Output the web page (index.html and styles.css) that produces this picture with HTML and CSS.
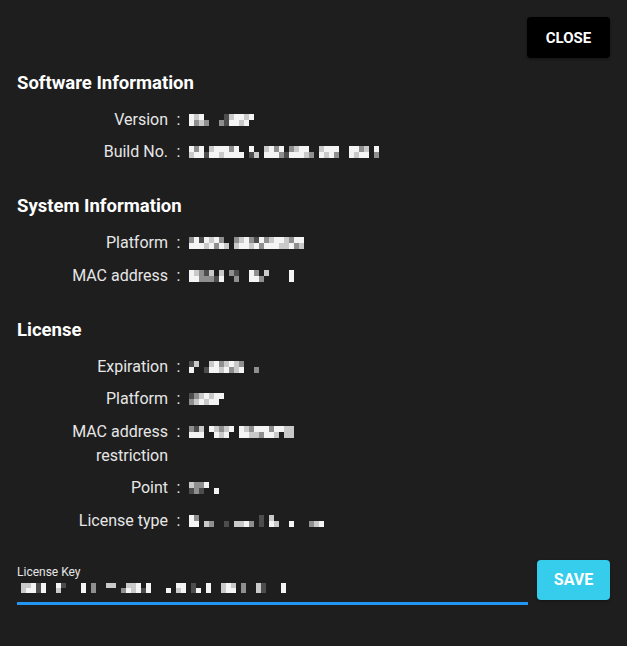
FILE: index.html
```html
<!DOCTYPE html>
<html lang="en">
<head>
<meta charset="utf-8">
<title>About</title>
<link rel="stylesheet" href="styles.css">
</head>
<body>
<div class="dialog">
  <div class="header">
    <button class="btn btn-close" type="button">Close</button>
  </div>

  <section class="section first">
    <h2 class="heading">Software Information</h2>
    <div class="rows">
      <div class="row"><span class="label">Version</span><span class="colon">:</span>
        <span class="mz"><i class="t1 b1"></i><i class="t2 b3"></i><i class="t1 b2"></i><i class="b3"></i><i></i><i></i><i class="b3"></i><i class="t4 b4"></i><i class="t2 b1"></i><i class="t1 b1"></i><i class="t1 b2"></i><i class="t2 b1"></i><i class="t1"></i></span></div>
      <div class="row"><span class="label">Build No.</span><span class="colon">:</span>
        <span class="mz"><i class="t1 b2"></i><i class="t3 b1"></i><i class="t1 b1"></i><i class="b4"></i><i class="t2 b1"></i><i class="t1 b1"></i><i class="t1 b2"></i><i class="t1 b1"></i><i class="t3 b1"></i><i class="t1 b1"></i><i class="b1"></i><i></i><i class="t1 b4"></i><i class="b2"></i><i></i><i class="t2 b1"></i><i class="t1 b1"></i><i class="t3 b1"></i><i class="t1 b3"></i><i class="b4"></i><i class="t3 b1"></i><i class="t2 b1"></i><i class="t1 b1"></i><i class="t1 b2"></i><i class="b3"></i><i></i><i class="t2 b1"></i><i class="t1 b2"></i><i class="t1 b1"></i><i class="t1 b3"></i><i></i><i></i><i class="t1 b1"></i><i class="t1 b2"></i><i class="t3 b1"></i><i class="t2 b1"></i><i></i><i class="t1 b3"></i></span></div>
    </div>
  </section>

  <section class="section">
    <h2 class="heading">System Information</h2>
    <div class="rows">
      <div class="row"><span class="label">Platform</span><span class="colon">:</span>
        <span class="mz"><i class="t3 b1"></i><i class="t1 b1"></i><i class="t4 b1"></i><i class="t1 b2"></i><i class="t2 b1"></i><i class="t1 b3"></i><i class="t3 b1"></i><i class="b2"></i><i></i><i class="t3 b2"></i><i class="t2 b1"></i><i class="t1 b1"></i><i class="t3 b2"></i><i class="t4 b1"></i><i class="t1 b3"></i><i class="t3 b1"></i><i class="t2 b1"></i><i class="t1 b1"></i><i class="t1 b2"></i><i class="t2 b2"></i><i class="t3 b1"></i><i class="t1 b3"></i><i class="t1 b2"></i></span></div>
      <div class="row"><span class="label">MAC address</span><span class="colon">:</span>
        <span class="mz"><i class="t1 b1"></i><i class="t2 b1"></i><i class="t3 b3"></i><i class="t4 b3"></i><i class="t2 b3"></i><i class="b4"></i><i class="t2 b1"></i><i></i><i class="t3"></i><i class="t4 b3"></i><i></i><i></i><i class="t1 b1"></i><i class="t3 b1"></i><i class="b3"></i><i class="t2"></i><i></i><i></i><i></i><i></i><i class="t1 b1"></i></span></div>
    </div>
  </section>

  <section class="section">
    <h2 class="heading">License</h2>
    <div class="rows">
      <div class="row"><span class="label">Expiration</span><span class="colon">:</span>
        <span class="mz"><i class="t4 b1"></i><i class="t2"></i><i></i><i class="b4"></i><i class="t2 b1"></i><i class="t1 b1"></i><i class="t3 b2"></i><i class="t2 b1"></i><i class="t1 b3"></i><i class="t2 b2"></i><i class="t3 b1"></i><i></i><i></i><i class="b3"></i></span></div>
      <div class="row"><span class="label">Platform</span><span class="colon">:</span>
        <span class="mz"><i class="t4 b3"></i><i class="t3 b2"></i><i class="t2 b1"></i><i class="t1 b2"></i><i class="t2 b1"></i><i class="t1 b1"></i><i class="t1"></i></span></div>
      <div class="row"><span class="label">MAC address restriction</span><span class="colon">:</span>
        <span class="mz"><i class="t3 b1"></i><i class="t4 b1"></i><i class="t2 b1"></i><i></i><i class="t1"></i><i class="t2 b1"></i><i class="t3 b2"></i><i class="t2 b1"></i><i class="t1"></i><i></i><i class="t1 b1"></i><i class="t2 b1"></i><i class="t3 b2"></i><i class="t1 b2"></i><i class="t1 b3"></i><i class="t1 b1"></i><i class="t3 b1"></i><i class="t1 b2"></i><i class="t1"></i><i class="t2 b2"></i><i class="t2 b2"></i></span></div>
      <div class="row"><span class="label">Point</span><span class="colon">:</span>
        <span class="mz"><i class="t2 b4"></i><i class="t3 b3"></i><i class="t3 b4"></i><i class="t1"></i><i></i><i class="b1"></i></span></div>
      <div class="row"><span class="label">License type</span><span class="colon">:</span>
        <span class="mz"><i class="t1 b1"></i><i class="t3 b1"></i><i></i><i class="b2"></i><i class="b3"></i><i></i><i></i><i class="b4"></i><i></i><i class="b2"></i><i class="b2"></i><i class="b1"></i><i class="b3"></i><i></i><i class="t4 b4"></i><i></i><i class="t2 b1"></i><i class="b2"></i><i></i><i></i><i class="b1"></i><i></i><i></i><i></i><i class="b3"></i><i class="b2"></i><i class="b1"></i></span></div>
    </div>
  </section>

  <div class="key-row">
    <label class="field">
      <span class="field-label">License Key</span>
      <span class="field-input">
        <span class="mz mz-key"><i class="t2 b2"></i><i class="t2 b1"></i><i class="t1 b1"></i><i class="t4 b4"></i><i class="t1 b1"></i><i></i><i></i><i class="t1 b2"></i><i class="t4"></i><i></i><i></i><i></i><i class="t1 b1"></i><i></i><i class="t3 b3"></i><i></i><i></i><i class="t2"></i><i class="t2"></i><i></i><i class="b3"></i><i class="t2 b1"></i><i class="t2 b2"></i><i class="t1 b1"></i><i class="b4"></i><i class="t1 b1"></i><i></i><i></i><i></i><i class="b1"></i><i></i><i class="t1 b2"></i><i class="t1 b1"></i><i></i><i class="t4 b4"></i><i class="b1"></i><i></i><i class="t1 b1"></i><i></i><i></i><i class="t2 b2"></i><i class="t1 b1"></i><i class="t2 b1"></i><i></i><i class="t3 b3"></i><i></i><i></i><i class="t2 b2"></i><i class="t4 b4"></i><i></i><i></i><i></i><i class="t1 b1"></i></span>
      </span>
    </label>
    <button class="btn btn-save" type="button">Save</button>
  </div>
</div>
</body>
</html>
```

FILE: styles.css
```css
* {
  box-sizing: border-box;
}

html, body {
  margin: 0;
  padding: 0;
  background: #1e1e1e;
}

body {
  font-family: Roboto, "Liberation Sans", Arial, sans-serif;
  color: #e6e6e6;
}

.dialog {
  padding: 17px 17px 0 17px;
  min-height: 646px;
}

.header {
  display: flex;
  justify-content: flex-end;
}

.btn {
  font-family: Roboto, "Liberation Sans", Arial, sans-serif;
  font-weight: 700;
  font-size: 15px;
  text-transform: uppercase;
  color: #ffffff;
  border: none;
  border-radius: 4px;
  padding: 0;
  cursor: pointer;
}

.btn-close {
  width: 83px;
  height: 41px;
  background: #000000;
  box-shadow: 0 1px 3px rgba(0, 0, 0, 0.4);
}

.btn-save {
  width: 73px;
  height: 40px;
  background: #35cdeb;
  flex: none;
  font-size: 16px;
  box-shadow: 0 1px 3px rgba(0, 0, 0, 0.35);
}

.section {
  margin-top: 29.5px;
}

.section.first {
  margin-top: 12px;
}

.heading {
  margin: 0;
  padding-top: 0.5px;
  margin-bottom: 13px;
  font-size: 18.5px;
  line-height: 24px;
  font-weight: 700;
  color: #ffffff;
}

.rows {
  display: flex;
  flex-direction: column;
  gap: 8.5px;
}

.row {
  display: flex;
  align-items: flex-start;
  font-size: 16px;
  line-height: 24px;
}

.label {
  width: 151px;
  flex: none;
  text-align: right;
}

.colon {
  width: 21px;
  flex: none;
  text-align: center;
}

.mz {
  display: flex;
  height: 12px;
  margin-top: 6px;
}

.mz i {
  display: block;
  width: 5px;
  height: 100%;
  background: linear-gradient(to bottom, var(--t, transparent) 0 50%, var(--b, transparent) 50% 100%);
}

.t1 { --t: #f4f4f4; }
.t2 { --t: #c9c9c9; }
.t3 { --t: #8f8f8f; }
.t4 { --t: #4d4d4d; }
.b1 { --b: #f4f4f4; }
.b2 { --b: #c9c9c9; }
.b3 { --b: #8f8f8f; }
.b4 { --b: #4d4d4d; }

.key-row {
  display: flex;
  align-items: flex-start;
  gap: 9px;
  margin-top: 27px;
}

.field {
  flex: 1;
  display: flex;
  flex-direction: column;
  margin-top: 5px;
}

.field-label {
  font-size: 12px;
  line-height: 14px;
  color: #e6e6e6;
}

.field-input {
  display: block;
  padding: 4px 0 9px 4px;
  border-bottom: 3px solid #2196f3;
}

.mz-key {
  height: 10px;
  margin-top: 0;
}
```
